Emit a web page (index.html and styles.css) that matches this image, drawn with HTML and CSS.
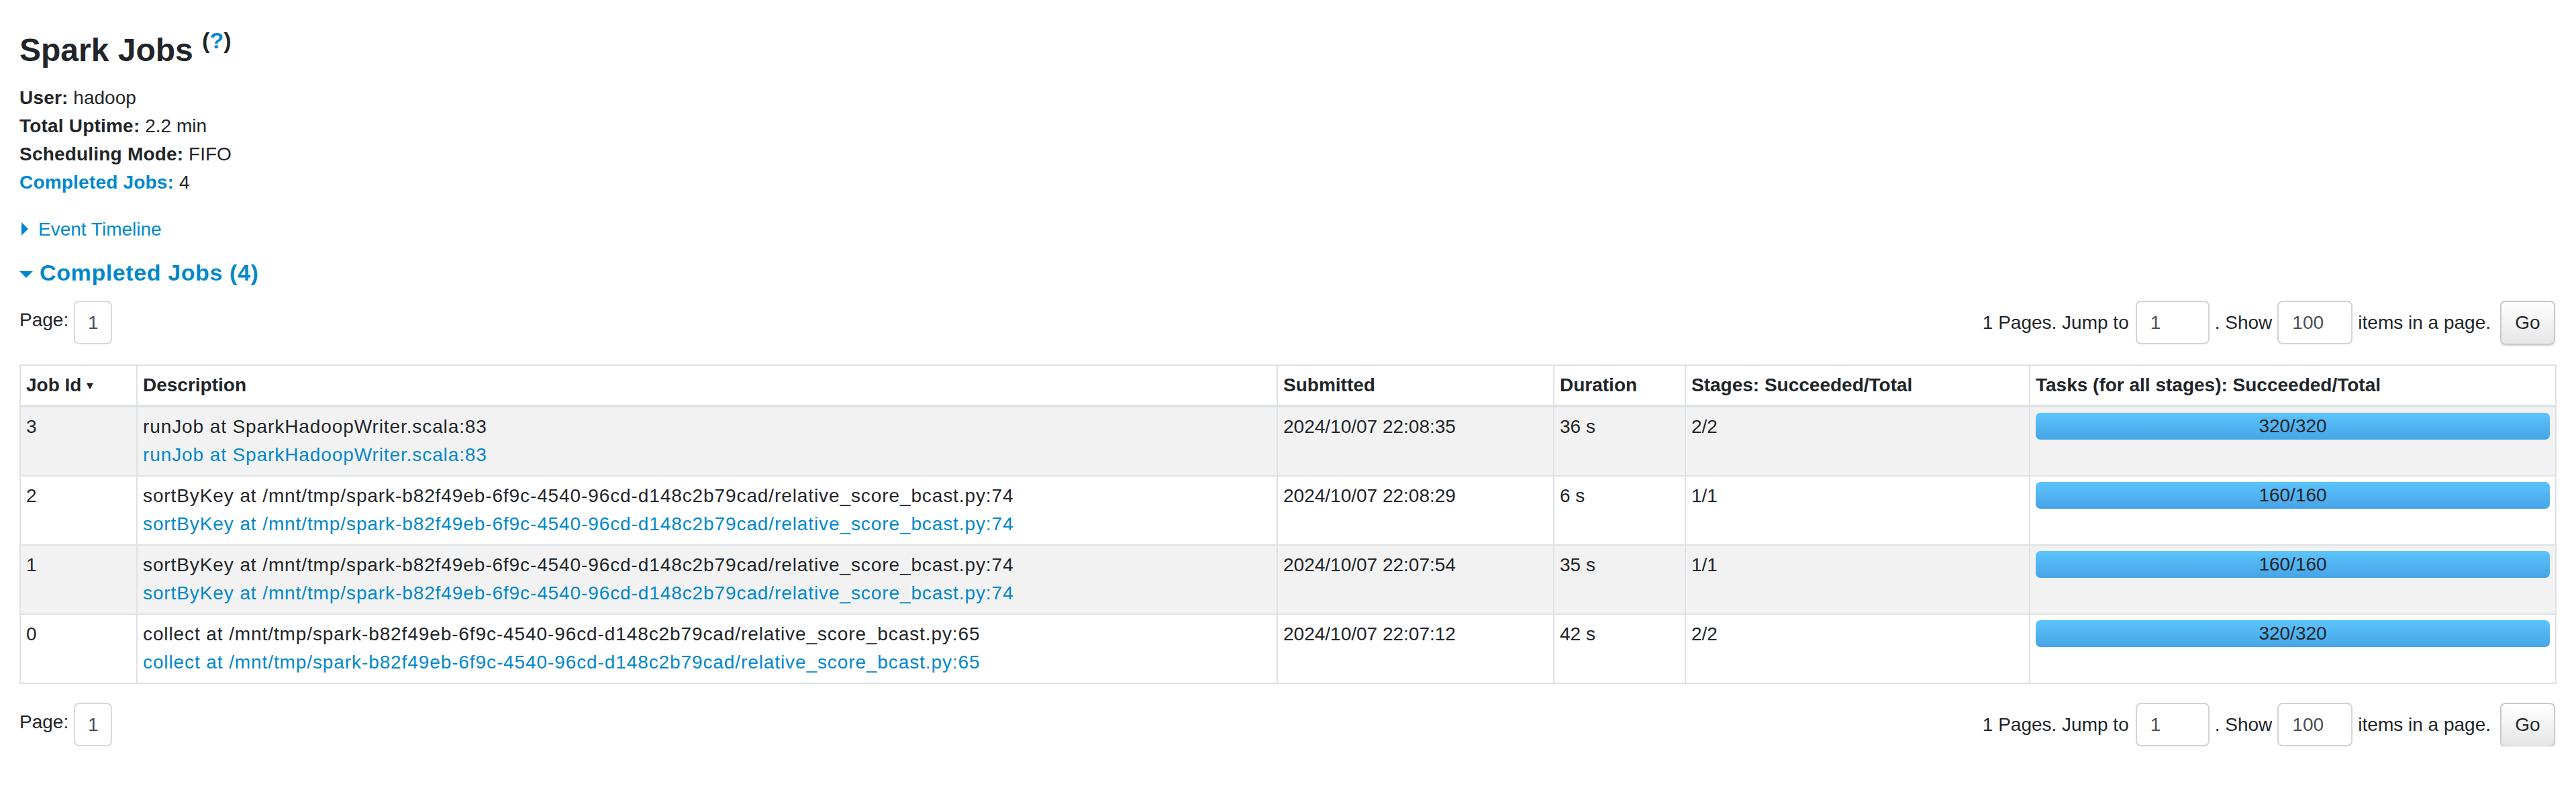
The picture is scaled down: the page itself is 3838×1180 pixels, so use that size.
FILE: index.html
```html
<!DOCTYPE html>
<html lang="en">
<head>
<meta charset="utf-8">
<title>Spark Jobs</title>
<link rel="stylesheet" href="styles.css">
</head>
<body>
<div class="page">
  <h3 class="title">Spark Jobs <sup class="help">(<a class="link">?</a>)</sup></h3>

  <ul class="summary">
    <li><strong>User:</strong> hadoop</li>
    <li><strong>Total Uptime:</strong> 2.2 min</li>
    <li><strong>Scheduling Mode:</strong> FIFO</li>
    <li><a class="link"><strong>Completed Jobs:</strong></a> 4</li>
  </ul>

  <div class="timeline"><span class="arrow-closed"></span><a class="link">Event Timeline</a></div>

  <h4 class="section"><span class="arrow-open"></span> <a class="link">Completed Jobs (4)</a></h4>

  <div class="pager pager-top">
    <div class="pager-left"><span class="pager-label">Page:</span><span class="page-box">1</span></div>
    <div class="pager-right">
      <span class="ptext">1 Pages. Jump to</span>
      <input class="field field-jump" type="text" value="1">
      <span class="ptext">. Show</span>
      <input class="field field-show" type="text" value="100">
      <span class="ptext">items in a page.</span>
      <button class="go" type="button">Go</button>
    </div>
  </div>

  <table class="jobs">
    <colgroup>
      <col class="c-id"><col class="c-desc"><col class="c-sub"><col class="c-dur"><col class="c-stage"><col class="c-task">
    </colgroup>
    <thead>
      <tr>
        <th>Job Id <svg class="sort" width="10" height="10" viewBox="0 0 10 10"><path d="M0 1 L10 1 L5 10 Z" fill="#212529"/></svg></th>
        <th>Description</th>
        <th>Submitted</th>
        <th>Duration</th>
        <th>Stages: Succeeded/Total</th>
        <th>Tasks (for all stages): Succeeded/Total</th>
      </tr>
    </thead>
    <tbody>
      <tr class="odd">
        <td>3</td>
        <td><div class="desc">runJob at SparkHadoopWriter.scala:83</div><a class="link desc">runJob at SparkHadoopWriter.scala:83</a></td>
        <td>2024/10/07 22:08:35</td>
        <td>36 s</td>
        <td>2/2</td>
        <td><div class="bar">320/320</div></td>
      </tr>
      <tr>
        <td>2</td>
        <td><div class="desc">sortByKey at /mnt/tmp/spark-b82f49eb-6f9c-4540-96cd-d148c2b79cad/relative_score_bcast.py:74</div><a class="link desc">sortByKey at /mnt/tmp/spark-b82f49eb-6f9c-4540-96cd-d148c2b79cad/relative_score_bcast.py:74</a></td>
        <td>2024/10/07 22:08:29</td>
        <td>6 s</td>
        <td>1/1</td>
        <td><div class="bar">160/160</div></td>
      </tr>
      <tr class="odd">
        <td>1</td>
        <td><div class="desc">sortByKey at /mnt/tmp/spark-b82f49eb-6f9c-4540-96cd-d148c2b79cad/relative_score_bcast.py:74</div><a class="link desc">sortByKey at /mnt/tmp/spark-b82f49eb-6f9c-4540-96cd-d148c2b79cad/relative_score_bcast.py:74</a></td>
        <td>2024/10/07 22:07:54</td>
        <td>35 s</td>
        <td>1/1</td>
        <td><div class="bar">160/160</div></td>
      </tr>
      <tr>
        <td>0</td>
        <td><div class="desc">collect at /mnt/tmp/spark-b82f49eb-6f9c-4540-96cd-d148c2b79cad/relative_score_bcast.py:65</div><a class="link desc">collect at /mnt/tmp/spark-b82f49eb-6f9c-4540-96cd-d148c2b79cad/relative_score_bcast.py:65</a></td>
        <td>2024/10/07 22:07:12</td>
        <td>42 s</td>
        <td>2/2</td>
        <td><div class="bar">320/320</div></td>
      </tr>
    </tbody>
  </table>

  <div class="pager pager-bottom">
    <div class="pager-left"><span class="pager-label">Page:</span><span class="page-box">1</span></div>
    <div class="pager-right">
      <span class="ptext">1 Pages. Jump to</span>
      <input class="field field-jump" type="text" value="1">
      <span class="ptext">. Show</span>
      <input class="field field-show" type="text" value="100">
      <span class="ptext">items in a page.</span>
      <button class="go" type="button">Go</button>
    </div>
  </div>
</div>
</body>
</html>
```

FILE: styles.css
```css
* { box-sizing: border-box; }

html, body {
  margin: 0;
  padding: 0;
  background: #ffffff;
}

body {
  font-family: "Liberation Sans", Arial, Helvetica, sans-serif;
  font-size: 28px;
  line-height: 42px;
  color: #212529;
}

.page {
  padding: 46px 31px 0 29px;
}

.link {
  color: #0088cc;
  text-decoration: none;
}

.title {
  margin: 0;
  font-size: 48px;
  line-height: 58px;
  font-weight: 700;
  color: #212529;
}

.help {
  font-size: 34px;
  line-height: 0;
  vertical-align: 19px;
  font-weight: 700;
}

.summary {
  list-style: none;
  margin: 21px 0 0 0;
  padding: 0;
}

.summary strong {
  font-weight: 700;
  letter-spacing: 0.2px;
}

.timeline {
  margin-top: 28px;
  display: flex;
  align-items: baseline;
}

.arrow-closed {
  display: inline-block;
  width: 0;
  height: 0;
  border-top: 10px solid transparent;
  border-bottom: 10px solid transparent;
  border-left: 10px solid #0088cc;
  margin-left: 3px;
  margin-right: 15px;
}

.section {
  margin: 23px 0 0 0;
  font-size: 34px;
  line-height: 40px;
  font-weight: 700;
  letter-spacing: 0.6px;
}

.arrow-open {
  display: inline-block;
  width: 0;
  height: 0;
  border-left: 10px solid transparent;
  border-right: 10px solid transparent;
  border-top: 10px solid #0088cc;
  margin-bottom: 4px;
}

.pager {
  display: flex;
  justify-content: space-between;
  align-items: center;
  height: 65px;
}

.pager-top { margin-top: 22px; }
.pager-bottom { margin-top: 28px; }

.pager-left {
  display: flex;
  align-items: center;
  gap: 8px;
}

.pager-label {
  margin-bottom: 8px;
}

.page-box {
  display: block;
  width: 57px;
  height: 65px;
  border: 2px solid #d5dae0;
  border-radius: 8px;
  text-align: center;
  line-height: 61px;
  color: #495057;
}

.pager-right {
  display: flex;
  align-items: center;
  gap: 8px;
}

.ptext { white-space: nowrap; }

.field {
  height: 65px;
  border: 2px solid #ced4da;
  border-radius: 8px;
  padding: 0 0 0 20px;
  font-family: "Liberation Sans", Arial, Helvetica, sans-serif;
  font-size: 28px;
  color: #495057;
  background: #fff;
  margin: 0;
}

.field-jump { width: 110px; margin-left: 2px; }
.field-show { width: 112px; }

.go {
  width: 82px;
  height: 66px;
  margin: 0 0 0 6px;
  border: 2px solid #c6c9ce;
  border-radius: 8px;
  background: linear-gradient(to bottom, #ffffff, #e6e6e6);
  box-shadow: 0 2px 2px rgba(0, 0, 0, 0.12);
  font-family: "Liberation Sans", Arial, Helvetica, sans-serif;
  font-size: 28px;
  color: #212529;
  padding: 0;
}

.jobs {
  margin-top: 30px;
  width: 100%;
  table-layout: fixed;
  border-collapse: collapse;
  background: #fff;
}

.c-id { width: 174px; }
.c-desc { width: 1699px; }
.c-sub { width: 412px; }
.c-dur { width: 196px; }
.c-stage { width: 513px; }
.c-task { width: 784px; }

.jobs th,
.jobs td {
  border: 2px solid #dee2e6;
  padding: 8px 8px 9px 8px;
  text-align: left;
  vertical-align: top;
  white-space: nowrap;
  overflow: hidden;
}

.jobs th {
  font-weight: 700;
  padding: 8px 8px 8px 8px;
  border-bottom: 4px solid #dee2e6;
}

.sort { vertical-align: 3px; }

.jobs tr.odd td { background: #f2f2f2; }

.desc {
  display: block;
  letter-spacing: 0.9px;
}

.bar {
  height: 40px;
  border-radius: 7px;
  background: linear-gradient(to bottom, #5cc4fd, #46a4e7);
  text-align: center;
  line-height: 40px;
  color: #212529;
}
```
